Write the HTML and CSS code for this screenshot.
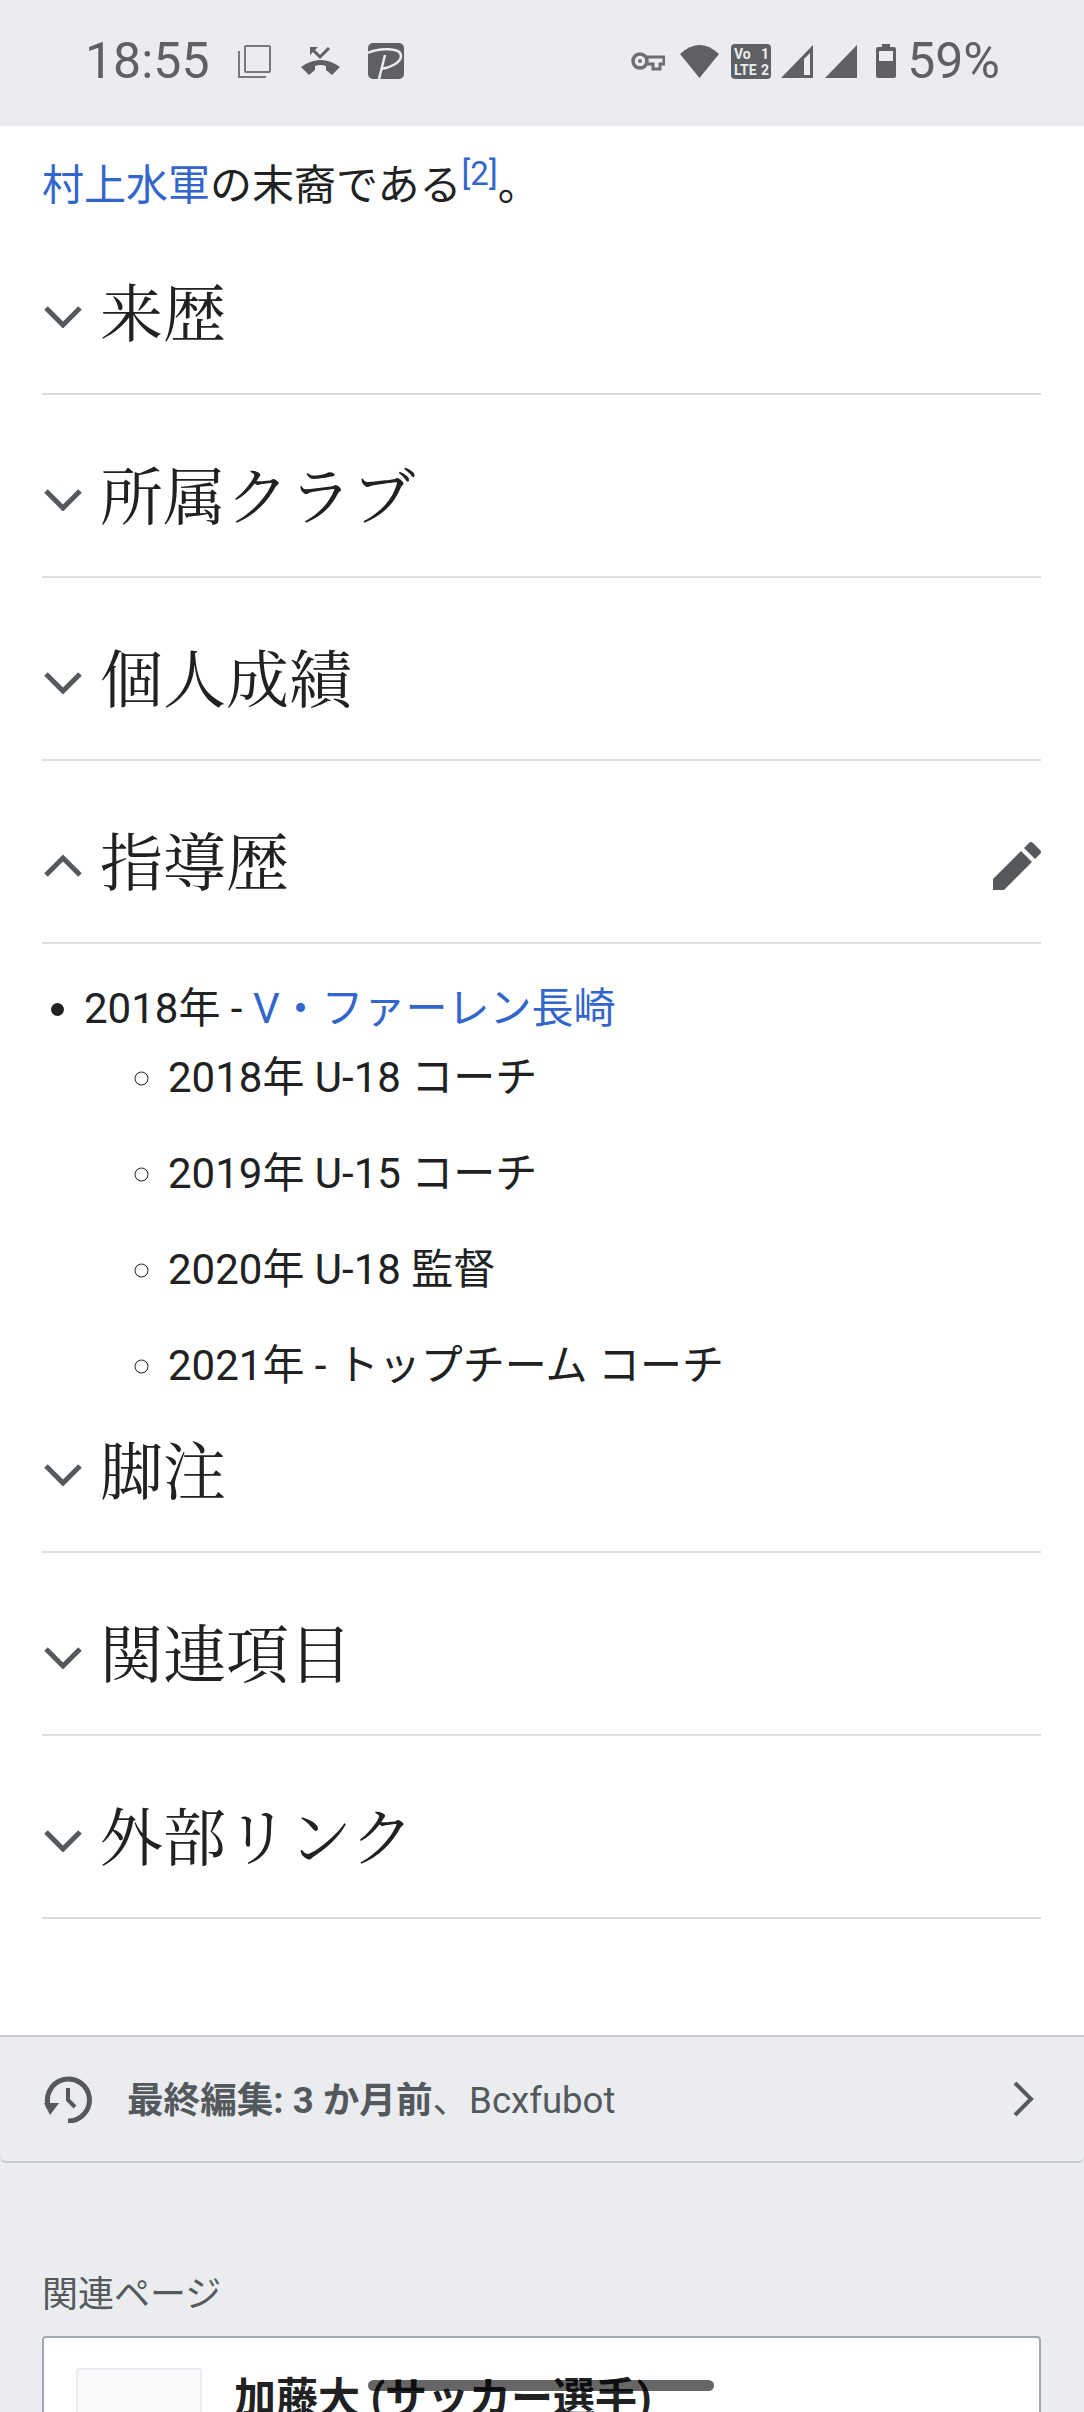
FILE: index.html
```html
<!DOCTYPE html>
<html lang="ja">
  <head>
    <meta charset="UTF-8" />
    <meta name="viewport" content="width=device-width, initial-scale=1.0" />
    <title>加藤大</title>
    <link rel="stylesheet" href="styles.css">
  </head>
  <body>
    <div class="statusbar">
      <div class="status-left">
        <span class="clock">18:55</span>
        <svg class="ic-copy" width="33" height="33" viewBox="0 0 33 33"><rect x="7" y="1" width="25" height="26" rx="1" fill="none" stroke="#77787c" stroke-width="2"/><path d="M1 6V32H28" fill="none" stroke="#77787c" stroke-width="2"/></svg>
        <svg class="ic-call" width="39" height="29" viewBox="0 0 39 29"><path d="M0 20Q19.5 6 39 20L31 28L25 23V19Q19.5 17 14 19V23L8 28Z" fill="#5f6063"/><path d="M12 3L19 10L28 1" fill="none" stroke="#5f6063" stroke-width="3"/><path d="M9 0H17L9 8Z" fill="#5f6063"/></svg>
        <svg class="ic-pay" width="36" height="36" viewBox="0 0 36 36"><rect width="36" height="36" rx="5" fill="#5f6063"/><path d="M0 10C10 5 33 4 33 13C33 20 21 25 13 26" fill="none" stroke="#eaecf0" stroke-width="2.5"/><path d="M17 12L11 36" stroke="#eaecf0" stroke-width="2.5"/></svg>
      </div>
      <div class="status-right">
        <svg class="ic-key" width="34" height="20" viewBox="0 0 34 20"><circle cx="9" cy="10" r="7" fill="none" stroke="#6d6e72" stroke-width="3.5"/><circle cx="9" cy="10" r="2" fill="#6d6e72"/><path d="M16 6H33V13H29V18H22V13H16" fill="none" stroke="#6d6e72" stroke-width="3"/></svg>
        <svg class="ic-wifi" width="39" height="33" viewBox="0 0 39 33"><path d="M0 9Q19.5 -9 39 9L19.5 33Z" fill="#5f6063"/></svg>
        <svg class="ic-volte" width="40" height="35" viewBox="0 0 40 35"><rect width="40" height="35" rx="4" fill="#5f6063"/><text class="volte-text" x="3" y="15">Vo</text><text class="volte-text" x="30" y="15">1</text><text class="volte-text" x="3" y="31">LTE</text><text class="volte-text" x="30" y="31">2</text></svg>
        <svg class="ic-signal" width="32" height="33" viewBox="0 0 32 33"><path d="M32 0V33H0Z" fill="#5f6063"/><path d="M23 14L29 8V30H23Z" fill="#eaecf0"/></svg>
        <svg class="ic-signal2" width="32" height="33" viewBox="0 0 32 33"><path d="M32 0V33H0Z" fill="#5f6063"/></svg>
        <svg class="ic-battery" width="20" height="34" viewBox="0 0 20 34"><path d="M6 0H14V3H18Q20 3 20 5V32Q20 34 18 34H2Q0 34 0 32V5Q0 3 2 3H6Z" fill="#5f6063"/><rect x="3" y="7" width="14" height="10" fill="#eaecf0"/></svg>
        <span class="battery-pct">59%</span>
      </div>
    </div>

    <div class="content">
      <p class="lead"><a href="#">村上水軍</a>の末裔である<sup class="ref"><a href="#">[2]</a></sup>。</p>

      <h2 class="sec-head"><svg class="chev" width="38" height="22" viewBox="0 0 38 22"><path d="M2 2L19 19L36 2" /></svg>来歴</h2>
      <h2 class="sec-head"><svg class="chev" width="38" height="22" viewBox="0 0 38 22"><path d="M2 2L19 19L36 2" /></svg>所属クラブ</h2>
      <h2 class="sec-head"><svg class="chev" width="38" height="22" viewBox="0 0 38 22"><path d="M2 2L19 19L36 2" /></svg>個人成績</h2>
      <h2 class="sec-head"><svg class="chev" width="38" height="22" viewBox="0 0 38 22"><path d="M2 20L19 3L36 20" /></svg>指導歴
        <svg class="pencil" width="48" height="48" viewBox="0 0 48 48"><path d="M0 37L28 9L39 20L11 48H0Z" fill="#54595d"/><path d="M31 6L36 1Q38 -1 40 1L47 8Q49 10 47 12L42 17Z" fill="#54595d"/></svg>
      </h2>
      <ul class="career">
        <li>2018年 - <a href="#">V・ファーレン長崎</a>
          <ul>
            <li>2018年 U-18 コーチ</li>
            <li>2019年 U-15 コーチ</li>
            <li>2020年 U-18 監督</li>
            <li>2021年 - トップチーム コーチ</li>
          </ul>
        </li>
      </ul>
      <h2 class="sec-head"><svg class="chev" width="38" height="22" viewBox="0 0 38 22"><path d="M2 2L19 19L36 2" /></svg>脚注</h2>
      <h2 class="sec-head"><svg class="chev" width="38" height="22" viewBox="0 0 38 22"><path d="M2 2L19 19L36 2" /></svg>関連項目</h2>
      <h2 class="sec-head"><svg class="chev" width="38" height="22" viewBox="0 0 38 22"><path d="M2 2L19 19L36 2" /></svg>外部リンク</h2>
    </div>

    <div class="footer">
      <div class="last-edit">
        <svg class="history" width="48" height="47" viewBox="0 0 48 47"><path d="M5 32A21 21 0 1 1 24 45" fill="none" stroke="#54595d" stroke-width="5"/><path d="M0 27H15L6 39Z" fill="#54595d"/><path d="M24 12V24L31 31" fill="none" stroke="#54595d" stroke-width="4"/></svg>
        <span class="edit-text"><b>最終編集: 3 か月前</b>、Bcxfubot</span>
        <svg class="arrow" width="21" height="36" viewBox="0 0 21 36"><path d="M2 2L18 18L2 34"/></svg>
      </div>
      <div class="related">
        <div class="related-label">関連ページ</div>
        <div class="card">
          <div class="thumb"></div>
          <div class="card-title">加藤大 (サッカー選手)</div>
        </div>
      </div>
    </div>

    <div class="homebar"></div>
  </body>
</html>
```

FILE: styles.css
```css
html, body {
  margin: 0;
  height: 2412px;
  overflow: hidden;
}
body {
  position: relative;
  background-color: #eaecf0;
  font-family: Roboto, "Noto Sans CJK JP", sans-serif;
  font-size: 42px;
  color: #202122;
}
a {
  color: #3366cc;
  text-decoration: none;
}

/* status bar */
.statusbar {
  height: 122px;
  padding: 0 84px 4px 85px;
  display: flex;
  justify-content: space-between;
  align-items: center;
  color: #5f6063;
  font-size: 50px;
}
.status-left, .status-right {
  display: flex;
  align-items: center;
}
.clock {
  margin-right: 28px;
}
.ic-call {
  margin-left: 30px;
}
.ic-pay {
  margin-left: 28px;
}
.ic-wifi {
  margin-left: 15px;
}
.ic-volte {
  margin-left: 12px;
}
.ic-signal {
  margin-left: 10px;
}
.ic-signal2 {
  margin-left: 12px;
}
.ic-battery {
  margin-left: 19px;
}
.battery-pct {
  margin-left: 11px;
}
.volte-text {
  font-size: 14px;
  font-weight: 700;
  fill: #eaecf0;
}

/* article */
.content {
  background-color: #fff;
  padding: 27px 43px 116px 42px;
}
.lead {
  margin: 0 0 -7px;
  line-height: 66px;
}
.ref {
  font-size: 33px;
  line-height: 0;
  vertical-align: 15px;
}
.sec-head {
  margin: 0;
  height: 62px;
  padding: 72px 0 47px;
  border-bottom: 2px solid #dadde1;
  display: flex;
  align-items: center;
  font-family: "Liberation Serif", "Noto Serif CJK JP", "Noto Sans CJK JP", serif;
  font-size: 63px;
  font-weight: 400;
  line-height: 62px;
}
.chev {
  margin: 4px 18px 0 2px;
  fill: none;
  stroke: #54595d;
  stroke-width: 5;
}
.pencil {
  margin: 3px 0 0 auto;
}
.career {
  margin: 32px 0 0;
  padding: 0 0 0 42px;
  line-height: 66px;
}
.career ul {
  margin: 3px 0 0;
  padding: 0;
  list-style-type: circle;
}
.career ul li {
  margin: 0 0 30px 84px;
}
.career ul li:last-child {
  margin-bottom: 0;
}
.career + .sec-head {
  padding-top: 43px;
}

/* footer */
.footer {
  color: #54595d;
  font-size: 36.6px;
}
.last-edit {
  height: 124px;
  padding: 0 50px 0 44px;
  background-color: #eaecf0;
  border-top: 2px solid #c8ccd1;
  border-bottom: 2px solid #c8ccd1;
  border-radius: 0 0 6px 6px;
  display: flex;
  align-items: center;
}
.edit-text {
  margin: 0 0 3px 35px;
}
.arrow {
  margin-left: auto;
  fill: none;
  stroke: #54595d;
  stroke-width: 4;
}
.related {
  padding: 0 43px 0 42px;
}
.related-label {
  margin-top: 110px;
  font-size: 36px;
  line-height: 44px;
}
.card {
  margin-top: 19px;
  padding: 30px 32px 0;
  height: 200px;
  background-color: #fff;
  border: 2px solid #a2a9b1;
  border-radius: 4px;
  display: flex;
  gap: 32px;
}
.thumb {
  width: 122px;
  height: 122px;
  background-color: #f8f9fa;
  border: 2px solid #eaecf0;
  border-radius: 3px;
}
.card-title {
  margin-top: 4px;
  color: #202122;
  font-size: 42px;
  font-weight: 700;
  line-height: 54px;
}

/* gesture handle lies on top of the page */
.homebar {
  position: absolute;
  left: 368px;
  top: 2380px;
  width: 346px;
  height: 11px;
  border-radius: 6px;
  background-color: rgba(0, 0, 0, 0.6);
}
```
